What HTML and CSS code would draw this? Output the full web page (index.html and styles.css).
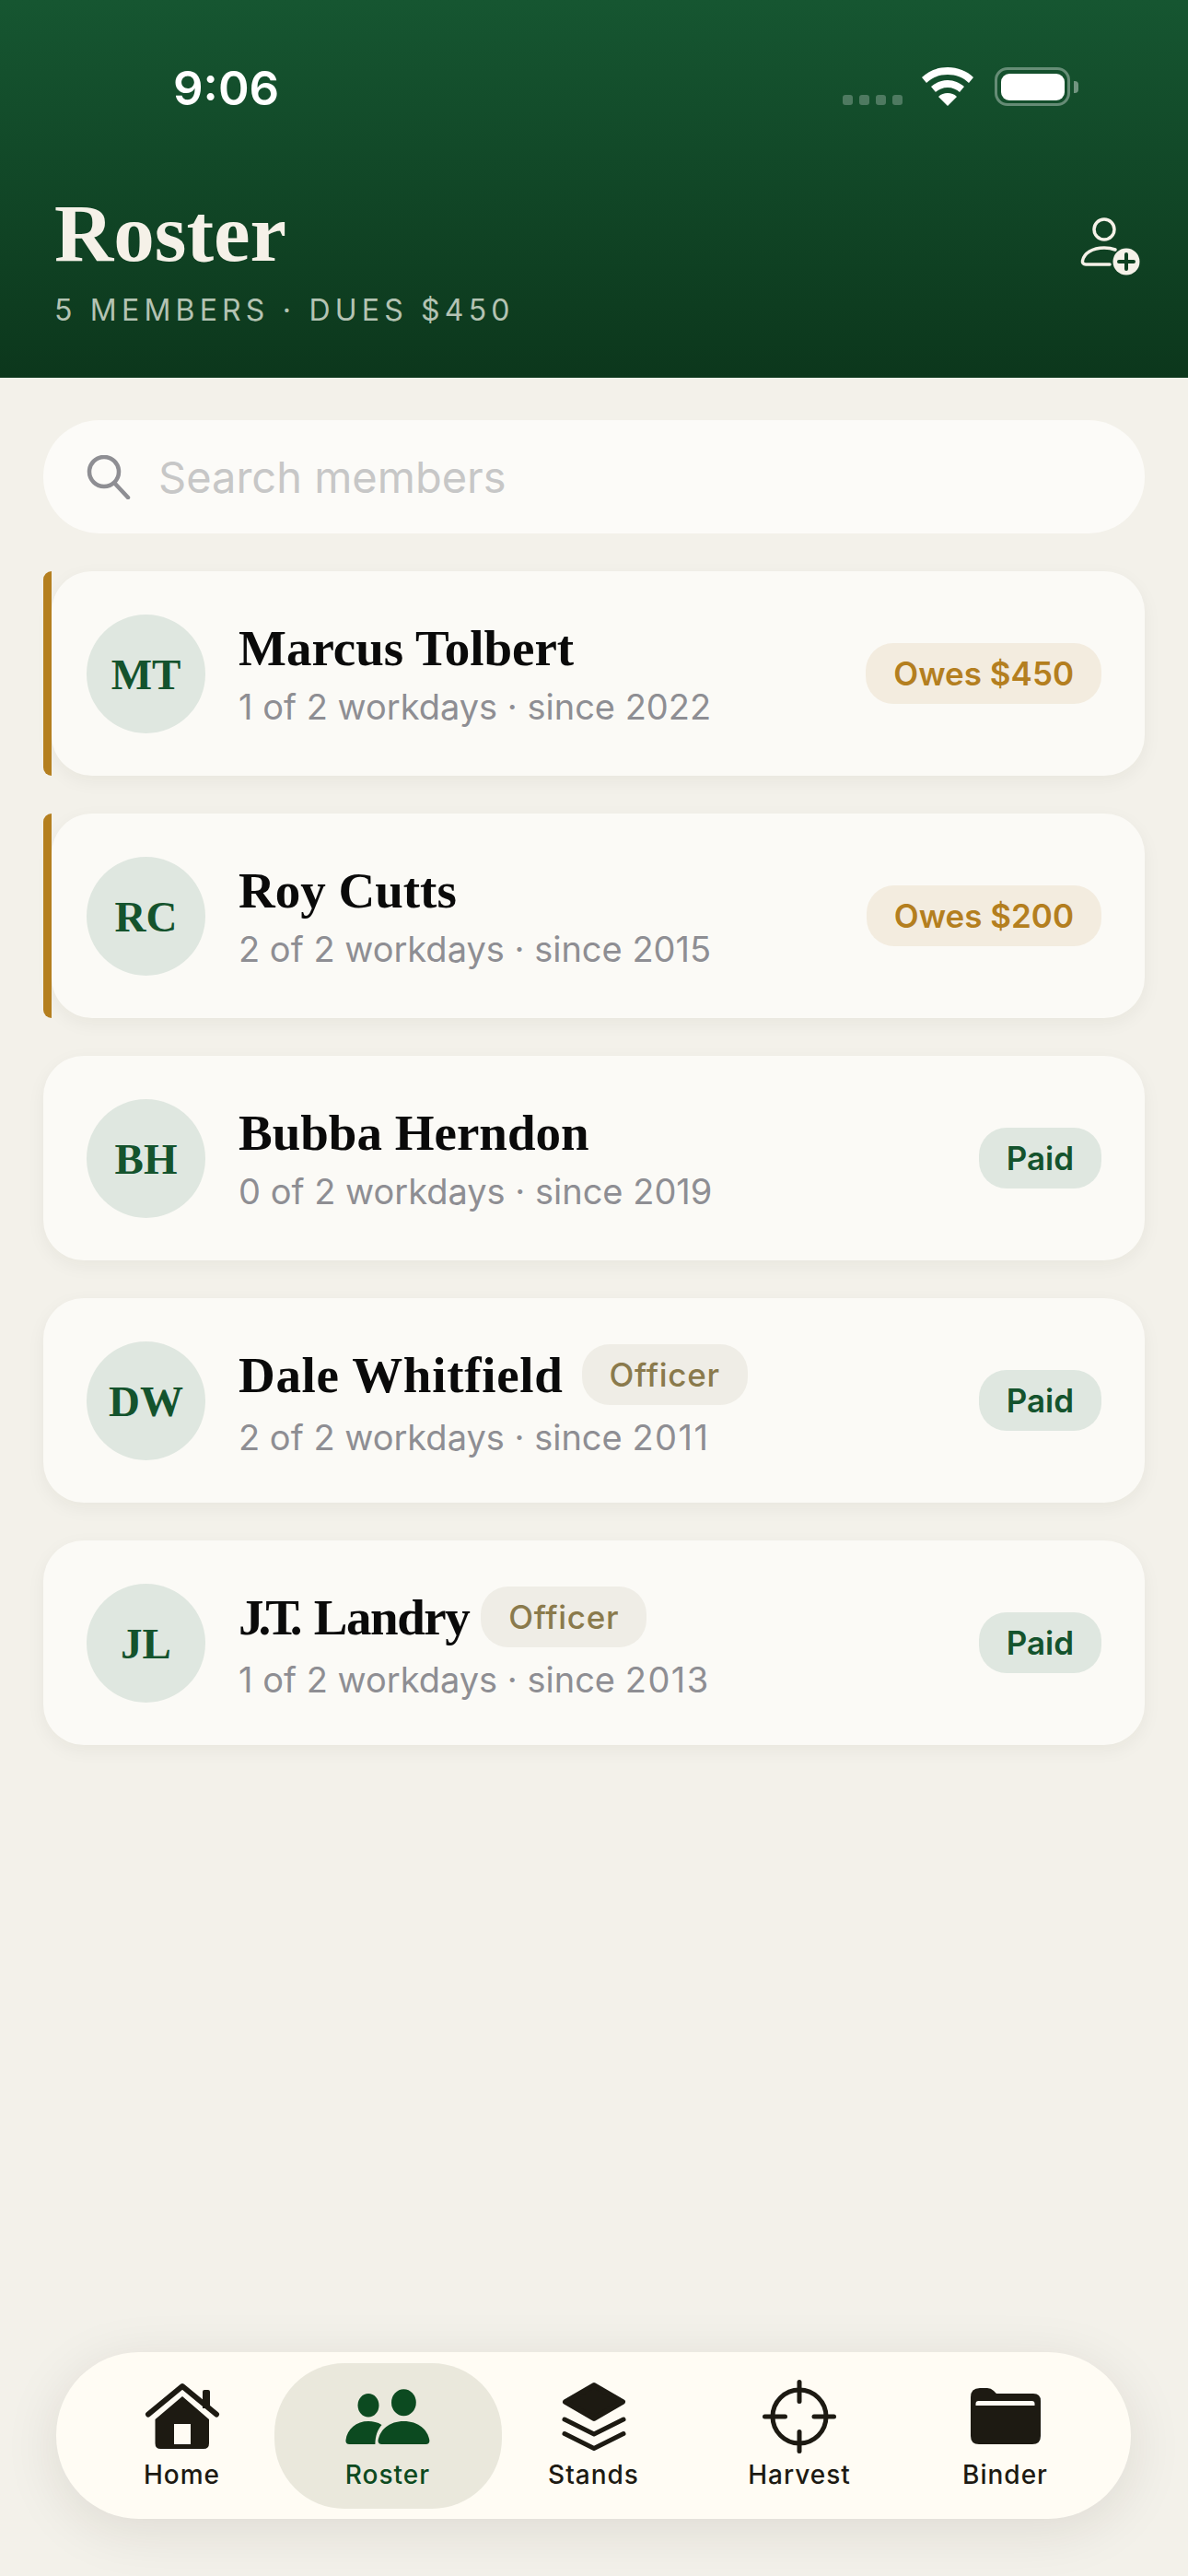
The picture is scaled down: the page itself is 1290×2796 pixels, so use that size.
FILE: index.html
```html
<!DOCTYPE html>
<html lang="en">
<head>
    <meta charset="UTF-8">
    <meta name="viewport" content="width=device-width, initial-scale=1.0">
    <title>Roster</title>
    <link rel="stylesheet" href="styles.css">
</head>
<body>

    <header class="top">
        <div class="status">
            <span class="time">9:06</span>
            <div class="status-icons">
                <div class="dots"><i></i><i></i><i></i><i></i></div>
                <svg class="wifi" width="58" height="42" viewBox="0 0 58 42">
                    <path fill="#fff" d="M29 0C18 0 8 4 1 11l5 6c6-6 14-9 23-9s17 3 23 9l5-6C50 4 40 0 29 0z"/>
                    <path fill="#fff" d="M29 14c-7 0-13 3-18 7l5 6c3-3 8-5 13-5s10 2 13 5l5-6c-5-4-11-7-18-7z"/>
                    <path fill="#fff" d="M29 28c-4 0-7 1-10 4l10 10 10-10c-3-3-6-4-10-4z"/>
                </svg>
                <div class="battery"><div class="battery-fill"></div></div>
                <div class="battery-cap"></div>
            </div>
        </div>

        <div class="title-row">
            <div>
                <h1>Roster</h1>
                <p class="summary">5 MEMBERS · DUES $450</p>
            </div>
            <svg class="add-member" width="70" height="70" viewBox="0 0 70 70">
                <circle cx="29" cy="17" r="11" fill="none" stroke="#f5f1e8" stroke-width="3.5"/>
                <path fill="none" stroke="#f5f1e8" stroke-width="3.5" stroke-linecap="round" d="M41 39C37 37.500 33 37 29 37C16 37 7 43 5.500 51C5 53.500 6.500 55 9 55H35"/>
                <circle cx="53" cy="52" r="14.500" fill="#f5f1e8"/>
                <path stroke="#0e4020" stroke-width="4" stroke-linecap="round" d="M45 52H61M53 44V60"/>
            </svg>
        </div>
    </header>

    <main class="content">
        <div class="search">
            <svg width="48" height="48" viewBox="0 0 48 48">
                <circle cx="19" cy="18" r="16" fill="none" stroke="#8e8e93" stroke-width="4.500"/>
                <path stroke="#8e8e93" stroke-width="4.500" stroke-linecap="round" d="M31 31L45 46"/>
            </svg>
            <span>Search members</span>
        </div>

        <div class="member owes">
            <div class="avatar">MT</div>
            <div class="info">
                <div class="name-line"><span class="name">Marcus Tolbert</span></div>
                <div class="meta">1 of 2 workdays · since 2022</div>
            </div>
            <span class="badge badge-owes">Owes $450</span>
        </div>

        <div class="member owes">
            <div class="avatar">RC</div>
            <div class="info">
                <div class="name-line"><span class="name">Roy Cutts</span></div>
                <div class="meta">2 of 2 workdays · since 2015</div>
            </div>
            <span class="badge badge-owes">Owes $200</span>
        </div>

        <div class="member">
            <div class="avatar">BH</div>
            <div class="info">
                <div class="name-line"><span class="name">Bubba Herndon</span></div>
                <div class="meta">0 of 2 workdays · since 2019</div>
            </div>
            <span class="badge badge-paid">Paid</span>
        </div>

        <div class="member officer">
            <div class="avatar">DW</div>
            <div class="info">
                <div class="name-line"><span class="name name-wide">Dale Whitfield</span><span class="badge badge-officer">Officer</span></div>
                <div class="meta">2 of 2 workdays · since <span class="year">2011</span></div>
            </div>
            <span class="badge badge-paid">Paid</span>
        </div>

        <div class="member officer">
            <div class="avatar">JL</div>
            <div class="info">
                <div class="name-line"><span class="name name-tight"><span class="initials">J.T.</span> Landry</span><span class="badge badge-officer">Officer</span></div>
                <div class="meta">1 of 2 workdays · since <span class="year">2013</span></div>
            </div>
            <span class="badge badge-paid">Paid</span>
        </div>
    </main>

    <nav class="tabs">
        <a class="tab">
            <svg width="100" height="84" viewBox="0 0 100 84">
                <path fill="none" stroke="#1d1a12" stroke-width="6" stroke-linecap="round" stroke-linejoin="round" d="M13 38.500L50 8L87 38.500"/>
                <path fill="#1d1a12" d="M72 14q0-2 2-2h4q2 0 2 2v18h-8z"/>
                <path fill="#1d1a12" fill-rule="evenodd" d="M20.500 44L50 19L79 44V70q0 6-6 6H26.500q-6 0-6-6zM41 49V71H59V49z"/>
            </svg>
            <span>Home</span>
        </a>
        <a class="tab active">
            <svg width="100" height="84" viewBox="0 0 100 84">
                <ellipse cx="29" cy="28.700" rx="11.500" ry="12.800"/>
                <ellipse cx="67.400" cy="25.700" rx="13.400" ry="14.500"/>
                <path d="M43.500 71q-4 0-4-4C41.500 55 52 46 67.400 46C83 46 93.500 55 95.400 67q0 4-4 4z"/>
                <path d="M4.400 67C6 54 16 46 29 46C34 46 39 47 43.500 50C39 55 36.500 62 36.400 71H8.400q-4 0-4-4z"/>
            </svg>
            <span>Roster</span>
        </a>
        <a class="tab">
            <svg width="100" height="84" viewBox="0 0 100 84">
                <path fill="#1d1a12" stroke="#1d1a12" stroke-width="6" stroke-linejoin="round" d="M50 7L81 25L50 43L19 25Z"/>
                <path fill="none" stroke="#1d1a12" stroke-width="5" stroke-linecap="round" stroke-linejoin="round" d="M18 44L50 60L82 44M18 59.500L50 75.500L82 59.500"/>
            </svg>
            <span>Stands</span>
        </a>
        <a class="tab">
            <svg width="100" height="84" viewBox="0 0 100 84">
                <circle cx="50" cy="41" r="29" fill="none" stroke="#1d1a12" stroke-width="5"/>
                <path fill="none" stroke="#1d1a12" stroke-width="5" stroke-linecap="round" d="M50 3.500V24.500M50 57.500V78.500M12.500 41H34.500M66 41H87.500"/>
            </svg>
            <span>Harvest</span>
        </a>
        <a class="tab">
            <svg width="100" height="84" viewBox="0 0 100 84">
                <path fill="#1d1a12" d="M12 20q0-10 10-10H30q4 0 7 3L40 16H80q8 0 8 8V62q0 9-9 9H21q-9 0-9-9z"/>
                <path fill="#fffcf4" d="M17.500 29v-2q0-3 3-3H78.500q3 0 3 3v2z"/>
            </svg>
            <span>Binder</span>
        </a>
    </nav>

</body>
</html>
```

FILE: styles.css
```css
* {
    box-sizing: border-box;
}
body {
    margin: 0;
    width: 1290px;
    height: 2796px;
    background: #f3f1ea;
    font-family: Inter, "Liberation Sans", sans-serif;
    display: flex;
    flex-direction: column;
    overflow: hidden;
}

/* header */
.top {
    height: 410px;
    background: linear-gradient(180deg, #165631 0%, #0c371c 100%);
}
.status {
    display: flex;
    justify-content: space-between;
    align-items: flex-start;
    padding: 65px 119px 0 188px;
    height: 205px;
}
.time {
    color: #fff;
    font-size: 51px;
    font-weight: 600;
    line-height: 62px;
}
.status-icons {
    display: flex;
    align-items: flex-start;
    padding-top: 8px;
}
.dots {
    display: flex;
    gap: 7px;
    margin-top: 30px;
    margin-right: 20px;
}
.dots i {
    display: block;
    width: 11px;
    height: 11px;
    border-radius: 3px;
    background: rgba(255, 255, 255, 0.25);
}
.wifi {
    margin-right: 22px;
}
.battery {
    width: 82px;
    height: 42px;
    padding: 3.5px;
    border: 3.5px solid rgba(255, 255, 255, 0.35);
    border-radius: 14px;
}
.battery-fill {
    height: 100%;
    background: #fff;
    border-radius: 9px;
}
.battery-cap {
    width: 5px;
    height: 13px;
    margin: 15px 0 0 4px;
    background: rgba(255, 255, 255, 0.4);
    border-radius: 0 4px 4px 0;
}
.title-row {
    display: flex;
    justify-content: space-between;
    align-items: flex-start;
    padding: 0 50px 0 59px;
}
h1 {
    margin: 0;
    color: #f5f1e8;
    font-family: "Liberation Serif", serif;
    font-size: 89px;
    font-weight: 700;
    line-height: 96px;
}
.summary {
    margin: 17px 0 0;
    color: #b4c3b3;
    font-size: 32px;
    line-height: 38px;
    letter-spacing: 5.2px;
}
.add-member {
    margin-top: 27px;
}

/* list */
.content {
    padding: 46px 47px 0;
    display: flex;
    flex-direction: column;
    gap: 41px;
}
.search {
    display: flex;
    align-items: center;
    gap: 30px;
    height: 123px;
    padding: 0 47px;
    background: #fcfbf8;
    border-radius: 61px;
}
.search span {
    color: #c7c7c7;
    font-size: 47px;
}
.member {
    position: relative;
    display: flex;
    align-items: flex-start;
    height: 222px;
    padding: 47px 47px 0;
    background: #fbfaf6;
    border-radius: 44px;
    box-shadow: 0 6px 20px rgba(40, 30, 10, 0.05);
}
.member.owes {
    margin-left: 9px;
    padding-left: 38px;
}
.member.owes::before {
    content: "";
    position: absolute;
    left: -9px;
    top: 0;
    bottom: 0;
    width: 9px;
    background: #b47f1f;
    border-radius: 9px 0 0 9px;
}
.avatar {
    flex: none;
    width: 129px;
    height: 129px;
    margin-right: 36px;
    display: flex;
    align-items: center;
    justify-content: center;
    border-radius: 50%;
    background: #dfe7e0;
    color: #14532d;
    font-family: "Liberation Serif", serif;
    font-size: 47px;
    font-weight: 700;
}
.info {
    flex: 1;
    min-width: 0;
    padding-top: 5px;
}
.name-line {
    display: flex;
    align-items: center;
    gap: 20px;
    height: 62px;
}
.name {
    color: #0a0a0a;
    font-family: "Liberation Serif", serif;
    font-size: 55px;
    font-weight: 700;
}
.name-wide {
    letter-spacing: 0.7px;
}
.name-tight {
    letter-spacing: -1.5px;
    word-spacing: 6px;
    margin-right: -7px;
}
.initials {
    letter-spacing: -6px;
}
.meta {
    margin-top: 10px;
    color: #8e8e93;
    font-size: 38px;
    line-height: 46px;
}
.officer .meta {
    margin-top: 14px;
}
.year {
    letter-spacing: 1.5px;
}
.badge {
    flex: none;
    display: flex;
    align-items: center;
    height: 66px;
    padding: 0 30px;
    border-radius: 30px;
    font-size: 35px;
    font-weight: 600;
}
.member > .badge {
    margin-top: 31px;
}
.badge-owes {
    background: #f3ecdf;
    color: #b47f1f;
}
.badge-paid {
    background: #dfe7e0;
    color: #14532d;
}
.badge-officer {
    background: #efede6;
    color: #8a7a4c;
    font-weight: 500;
    letter-spacing: 0.7px;
}

/* bottom nav */
.tabs {
    margin: auto 0 62px 61px;
    width: 1167px;
    height: 181px;
    display: flex;
    justify-content: center;
    background: #fffcf4;
    border-radius: 90px;
    box-shadow: 0 12px 60px rgba(40, 30, 10, 0.1);
}
.tab {
    flex: none;
    width: 223.500px;
    padding-top: 29px;
    display: flex;
    flex-direction: column;
    align-items: center;
    color: #1d1a12;
    font-size: 28px;
    font-weight: 500;
    letter-spacing: 1px;
}
.tab span {
    margin-top: 3px;
}
.tab.active {
    width: 247px;
    height: 158px;
    margin: 12px -11.750px 0;
    padding-top: 17px;
    background: #eae8dc;
    border-radius: 76px;
    color: #0c4a20;
    fill: #0c4a20;
}
```
